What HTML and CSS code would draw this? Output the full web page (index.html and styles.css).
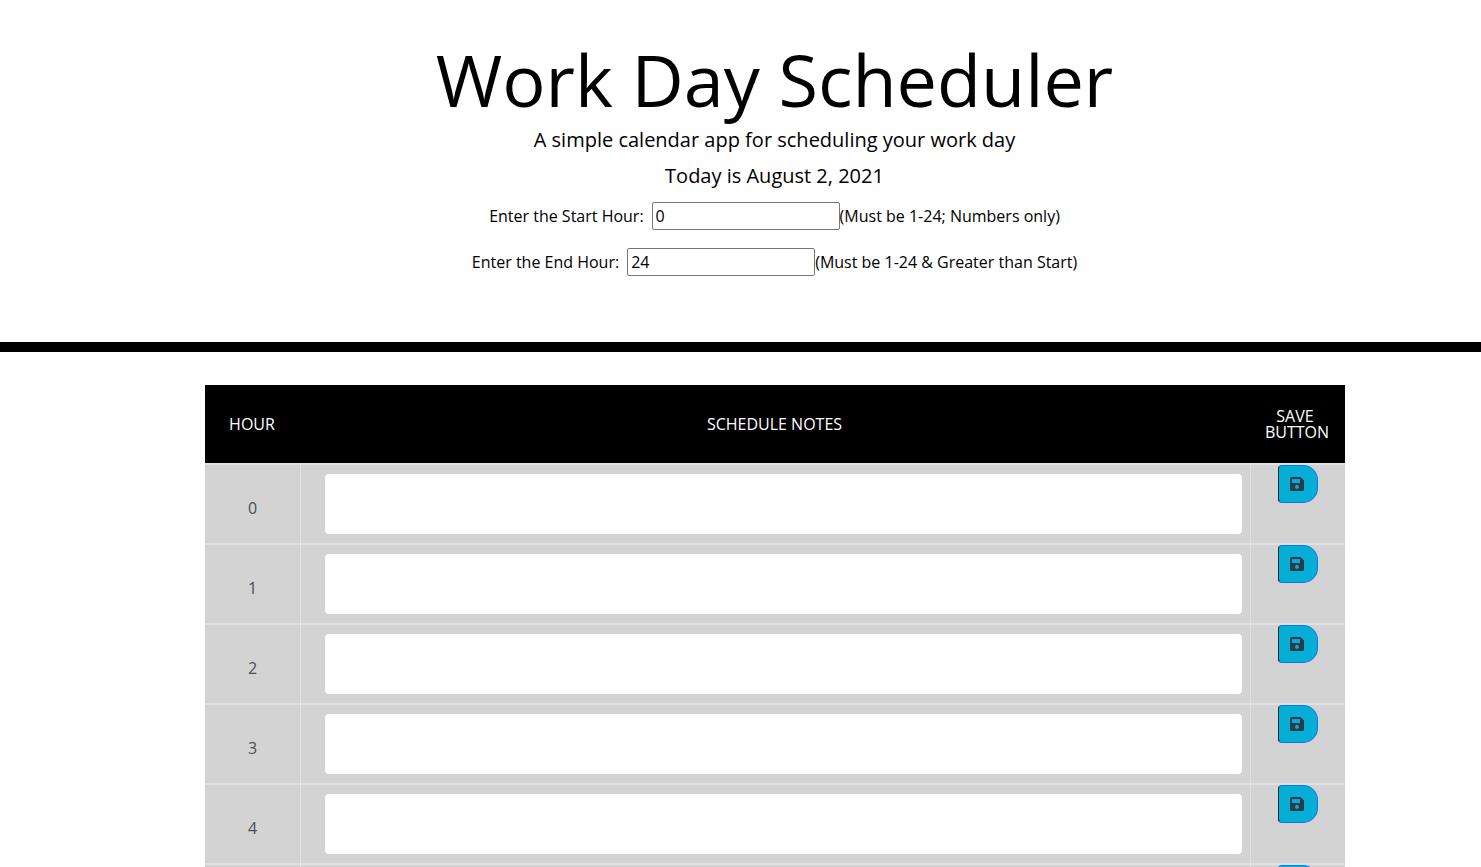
FILE: index.html
```html
<!DOCTYPE html>
<html lang="en">

<head>
    <title>Work Day Scheduler</title>
    <meta name="viewport" content="width=device-width, initial-scale=1.0">
    <link rel="stylesheet" href="styles.css">
</head>

<body>
    <header class="jumbotron">
        <h1>Work Day Scheduler</h1>
        <p class="lead">A simple calendar app for scheduling your work day</p>
        <p class="lead today">Today is August 2, 2021</p>
        <div class="hour-field start-field">
            <label for="start">Enter the Start Hour:</label>
            <input type="text" id="start" value="0">
            <span>(Must be 1-24; Numbers only)</span>
        </div>
        <div class="hour-field end-field">
            <label for="end">Enter the End Hour:</label>
            <input type="text" id="end" value="24">
            <span>(Must be 1-24 &amp; Greater than Start)</span>
        </div>
    </header>

    <main class="schedule">
        <div class="row head">
            <div class="hour">HOUR</div>
            <div class="notes-title">SCHEDULE NOTES</div>
            <div class="save-title">SAVE&nbsp;<br>BUTTON</div>
        </div>

        <div class="row">
            <div class="hour">0</div>
            <div class="notes"><textarea></textarea></div>
            <div class="save"><button class="save-btn"><svg viewBox="0 0 448 512"><path d="M433.941 129.941l-83.882-83.882A48 48 0 0 0 316.118 32H48C21.49 32 0 53.49 0 80v352c0 26.51 21.49 48 48 48h352c26.51 0 48-21.49 48-48V163.882a48 48 0 0 0-14.059-33.941zM224 416c-35.346 0-64-28.654-64-64 0-35.346 28.654-64 64-64s64 28.654 64 64c0 35.346-28.654 64-64 64zm96-304.52V212c0 6.627-5.373 12-12 12H76c-6.627 0-12-5.373-12-12V108c0-6.627 5.373-12 12-12h228.52c3.183 0 6.235 1.264 8.485 3.515l3.48 3.48A11.996 11.996 0 0 1 320 111.48z"/></svg></button></div>
        </div>
        <div class="row">
            <div class="hour">1</div>
            <div class="notes"><textarea></textarea></div>
            <div class="save"><button class="save-btn"><svg viewBox="0 0 448 512"><path d="M433.941 129.941l-83.882-83.882A48 48 0 0 0 316.118 32H48C21.49 32 0 53.49 0 80v352c0 26.51 21.49 48 48 48h352c26.51 0 48-21.49 48-48V163.882a48 48 0 0 0-14.059-33.941zM224 416c-35.346 0-64-28.654-64-64 0-35.346 28.654-64 64-64s64 28.654 64 64c0 35.346-28.654 64-64 64zm96-304.52V212c0 6.627-5.373 12-12 12H76c-6.627 0-12-5.373-12-12V108c0-6.627 5.373-12 12-12h228.52c3.183 0 6.235 1.264 8.485 3.515l3.48 3.48A11.996 11.996 0 0 1 320 111.48z"/></svg></button></div>
        </div>
        <div class="row">
            <div class="hour">2</div>
            <div class="notes"><textarea></textarea></div>
            <div class="save"><button class="save-btn"><svg viewBox="0 0 448 512"><path d="M433.941 129.941l-83.882-83.882A48 48 0 0 0 316.118 32H48C21.49 32 0 53.49 0 80v352c0 26.51 21.49 48 48 48h352c26.51 0 48-21.49 48-48V163.882a48 48 0 0 0-14.059-33.941zM224 416c-35.346 0-64-28.654-64-64 0-35.346 28.654-64 64-64s64 28.654 64 64c0 35.346-28.654 64-64 64zm96-304.52V212c0 6.627-5.373 12-12 12H76c-6.627 0-12-5.373-12-12V108c0-6.627 5.373-12 12-12h228.52c3.183 0 6.235 1.264 8.485 3.515l3.48 3.48A11.996 11.996 0 0 1 320 111.48z"/></svg></button></div>
        </div>
        <div class="row">
            <div class="hour">3</div>
            <div class="notes"><textarea></textarea></div>
            <div class="save"><button class="save-btn"><svg viewBox="0 0 448 512"><path d="M433.941 129.941l-83.882-83.882A48 48 0 0 0 316.118 32H48C21.49 32 0 53.49 0 80v352c0 26.51 21.49 48 48 48h352c26.51 0 48-21.49 48-48V163.882a48 48 0 0 0-14.059-33.941zM224 416c-35.346 0-64-28.654-64-64 0-35.346 28.654-64 64-64s64 28.654 64 64c0 35.346-28.654 64-64 64zm96-304.52V212c0 6.627-5.373 12-12 12H76c-6.627 0-12-5.373-12-12V108c0-6.627 5.373-12 12-12h228.52c3.183 0 6.235 1.264 8.485 3.515l3.48 3.48A11.996 11.996 0 0 1 320 111.48z"/></svg></button></div>
        </div>
        <div class="row">
            <div class="hour">4</div>
            <div class="notes"><textarea></textarea></div>
            <div class="save"><button class="save-btn"><svg viewBox="0 0 448 512"><path d="M433.941 129.941l-83.882-83.882A48 48 0 0 0 316.118 32H48C21.49 32 0 53.49 0 80v352c0 26.51 21.49 48 48 48h352c26.51 0 48-21.49 48-48V163.882a48 48 0 0 0-14.059-33.941zM224 416c-35.346 0-64-28.654-64-64 0-35.346 28.654-64 64-64s64 28.654 64 64c0 35.346-28.654 64-64 64zm96-304.52V212c0 6.627-5.373 12-12 12H76c-6.627 0-12-5.373-12-12V108c0-6.627 5.373-12 12-12h228.52c3.183 0 6.235 1.264 8.485 3.515l3.48 3.48A11.996 11.996 0 0 1 320 111.48z"/></svg></button></div>
        </div>
        <div class="row">
            <div class="hour">5</div>
            <div class="notes"><textarea></textarea></div>
            <div class="save"><button class="save-btn"><svg viewBox="0 0 448 512"><path d="M433.941 129.941l-83.882-83.882A48 48 0 0 0 316.118 32H48C21.49 32 0 53.49 0 80v352c0 26.51 21.49 48 48 48h352c26.51 0 48-21.49 48-48V163.882a48 48 0 0 0-14.059-33.941zM224 416c-35.346 0-64-28.654-64-64 0-35.346 28.654-64 64-64s64 28.654 64 64c0 35.346-28.654 64-64 64zm96-304.52V212c0 6.627-5.373 12-12 12H76c-6.627 0-12-5.373-12-12V108c0-6.627 5.373-12 12-12h228.52c3.183 0 6.235 1.264 8.485 3.515l3.48 3.48A11.996 11.996 0 0 1 320 111.48z"/></svg></button></div>
        </div>
    </main>
</body>
</html>
```

FILE: styles.css
```css
html, body {
    height: 100%;
    overflow: hidden;
}
body {
    margin: 0;
    font-family: "Open Sans", sans-serif;
    font-size: 16px;
    color: #000;
    background-color: #fff;
}
.jumbotron {
    height: 307px;
    padding: 35px 0 0 68px;
    border-bottom: 10px solid #000;
    text-align: center;
}
h1 {
    margin: 0 0 1px;
    font-size: 72px;
    font-weight: 400;
    line-height: 89px;
}
.lead {
    margin: 0;
    font-size: 20px;
    line-height: 30px;
}
.today {
    margin-top: 6px;
}
.hour-field {
    display: flex;
    justify-content: center;
    align-items: center;
    line-height: 24px;
}
.start-field {
    margin-top: 11px;
    height: 28px;
}
.end-field {
    margin-top: 18px;
    height: 28px;
}
.hour-field label {
    margin-right: 8px;
}
.hour-field input {
    width: 188px;
    height: 28px;
    box-sizing: border-box;
    padding: 1px 3px;
    border: 1px solid #767676;
    border-radius: 2px;
    font: inherit;
}
.schedule {
    width: 1140px;
    margin: 33px 0 0 205px;
}
.row {
    display: grid;
    grid-template-columns: 96px 950px 94px;
    height: 80px;
    box-sizing: border-box;
    border-top: 2px solid #dee2e6;
    background-color: #d3d3d3;
}
.head {
    height: 78px;
    border-top: 0;
    background-color: #000;
    color: #fff;
}
.row > div {
    display: flex;
    align-items: center;
    justify-content: center;
}
.hour {
    padding-top: 8px;
    border-right: 1px solid #dee2e6;
    color: #495057;
}
.head .hour {
    padding: 0 2px 0 0;
    border-right: 0;
    color: #fff;
}
.notes-title {
    padding-right: 3px;
}
.save-title {
    padding-right: 2px;
    line-height: 16px;
    text-align: center;
}
.notes {
    border-right: 1px solid #dee2e6;
    padding: 8px 8px 8px 24px;
}
.notes textarea {
    display: block;
    width: 100%;
    height: 60px;
    box-sizing: border-box;
    border: 0;
    border-radius: 4px;
    background-color: #fff;
    resize: none;
}
.row > .save {
    align-items: flex-start;
    justify-content: flex-start;
    padding-left: 27px;
}
.save-btn {
    display: flex;
    align-items: center;
    justify-content: center;
    width: 40px;
    height: 38px;
    padding: 0 2px 0 0;
    border: 1px solid #007bff;
    border-left-color: #222;
    border-radius: 4px 15px 15px 4px;
    background-color: #06aed5;
}
.save-btn svg {
    width: 14px;
    height: 16px;
    fill: #2a3b4c;
}
```
